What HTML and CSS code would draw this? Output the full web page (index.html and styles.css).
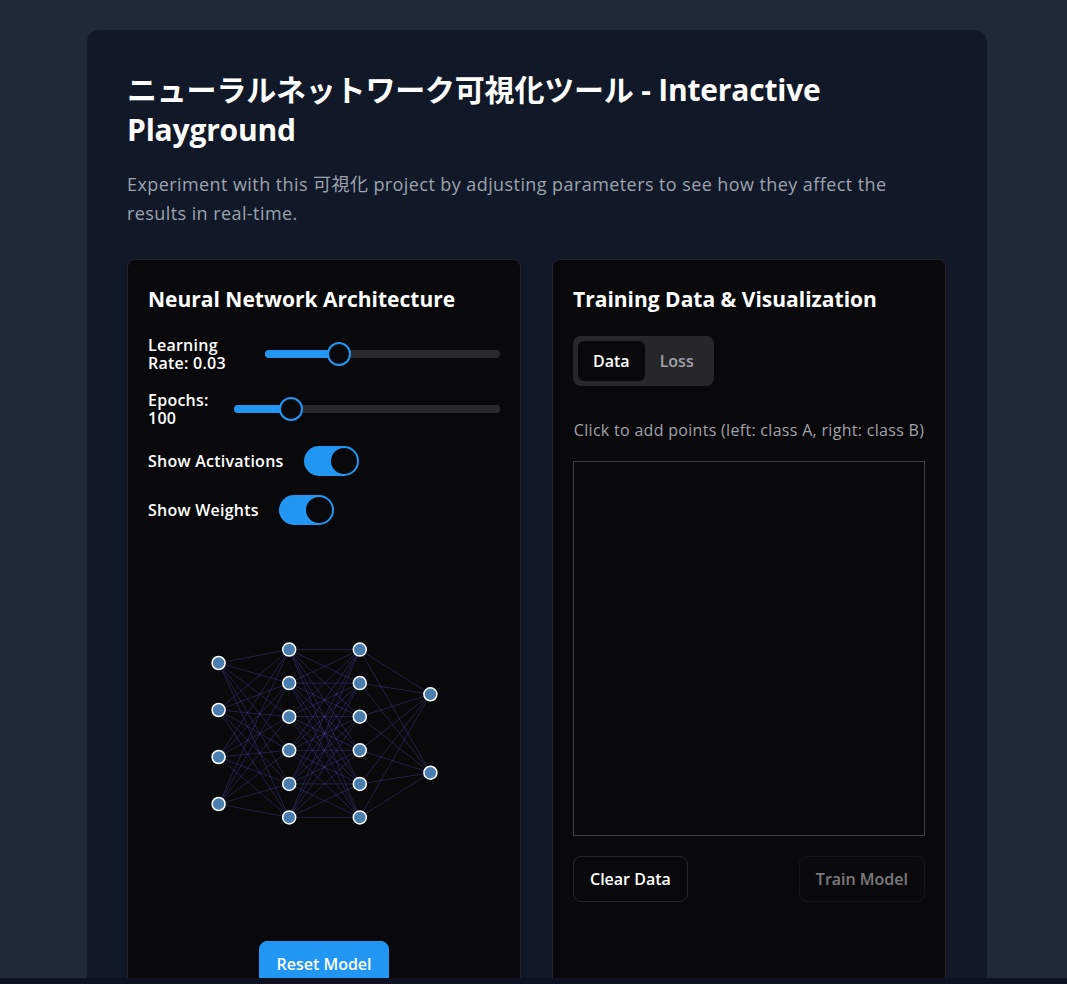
FILE: index.html
```html
<!DOCTYPE html>
<html lang="ja">
<head>
<meta charset="utf-8">
<title>ニューラルネットワーク可視化ツール</title>
<link rel="stylesheet" href="styles.css">
</head>
<body>
<main class="container">
  <h1 class="title">ニューラルネットワーク可視化ツール - Interactive Playground</h1>
  <p class="subtitle">Experiment with this 可視化 project by adjusting parameters to see how they affect the results in real-time.</p>
  <div class="grid">
    <section class="card">
      <h2 class="card-title">Neural Network Architecture</h2>
      <div class="controls">
        <div class="slider-row">
          <span class="ctl-label">Learning Rate: 0.03</span>
          <div class="slider" style="--v:31.3%"><div class="fill"></div><div class="thumb"></div></div>
        </div>
        <div class="slider-row">
          <span class="ctl-label">Epochs: 100</span>
          <div class="slider" style="--v:21.5%"><div class="fill"></div><div class="thumb"></div></div>
        </div>
        <div class="toggle-row">
          <span class="ctl-label">Show Activations</span>
          <span class="toggle"><span class="knob"></span></span>
        </div>
        <div class="toggle-row">
          <span class="ctl-label">Show Weights</span>
          <span class="toggle"><span class="knob"></span></span>
        </div>
      </div>
      <svg class="network" viewBox="0 0 353 375" width="353" height="375">
        <path class="edges" d="M70.6 117L141.2 103.6M70.6 117L141.2 137.1M70.6 117L141.2 170.7M70.6 117L141.2 204.3M70.6 117L141.2 237.9M70.6 117L141.2 271.4M70.6 164L141.2 103.6M70.6 164L141.2 137.1M70.6 164L141.2 170.7M70.6 164L141.2 204.3M70.6 164L141.2 237.9M70.6 164L141.2 271.4M70.6 211L141.2 103.6M70.6 211L141.2 137.1M70.6 211L141.2 170.7M70.6 211L141.2 204.3M70.6 211L141.2 237.9M70.6 211L141.2 271.4M70.6 258L141.2 103.6M70.6 258L141.2 137.1M70.6 258L141.2 170.7M70.6 258L141.2 204.3M70.6 258L141.2 237.9M70.6 258L141.2 271.4"/>
        <path class="edges" d="M141.2 103.6L211.8 103.6M141.2 103.6L211.8 137.1M141.2 103.6L211.8 170.7M141.2 103.6L211.8 204.3M141.2 103.6L211.8 237.9M141.2 103.6L211.8 271.4M141.2 137.1L211.8 103.6M141.2 137.1L211.8 137.1M141.2 137.1L211.8 170.7M141.2 137.1L211.8 204.3M141.2 137.1L211.8 237.9M141.2 137.1L211.8 271.4M141.2 170.7L211.8 103.6M141.2 170.7L211.8 137.1M141.2 170.7L211.8 170.7M141.2 170.7L211.8 204.3M141.2 170.7L211.8 237.9M141.2 170.7L211.8 271.4M141.2 204.3L211.8 103.6M141.2 204.3L211.8 137.1M141.2 204.3L211.8 170.7M141.2 204.3L211.8 204.3M141.2 204.3L211.8 237.9M141.2 204.3L211.8 271.4M141.2 237.9L211.8 103.6M141.2 237.9L211.8 137.1M141.2 237.9L211.8 170.7M141.2 237.9L211.8 204.3M141.2 237.9L211.8 237.9M141.2 237.9L211.8 271.4M141.2 271.4L211.8 103.6M141.2 271.4L211.8 137.1M141.2 271.4L211.8 170.7M141.2 271.4L211.8 204.3M141.2 271.4L211.8 237.9M141.2 271.4L211.8 271.4"/>
        <path class="edges" d="M211.8 103.6L282.4 148.3M211.8 103.6L282.4 226.7M211.8 137.1L282.4 148.3M211.8 137.1L282.4 226.7M211.8 170.7L282.4 148.3M211.8 170.7L282.4 226.7M211.8 204.3L282.4 148.3M211.8 204.3L282.4 226.7M211.8 237.9L282.4 148.3M211.8 237.9L282.4 226.7M211.8 271.4L282.4 148.3M211.8 271.4L282.4 226.7"/>
        <g class="nodes">
          <circle cx="70.6" cy="117" r="6.5"/>
          <circle cx="70.6" cy="164" r="6.5"/>
          <circle cx="70.6" cy="211" r="6.5"/>
          <circle cx="70.6" cy="258" r="6.5"/>
          <circle cx="141.2" cy="103.6" r="6.5"/>
          <circle cx="141.2" cy="137.1" r="6.5"/>
          <circle cx="141.2" cy="170.7" r="6.5"/>
          <circle cx="141.2" cy="204.3" r="6.5"/>
          <circle cx="141.2" cy="237.9" r="6.5"/>
          <circle cx="141.2" cy="271.4" r="6.5"/>
          <circle cx="211.8" cy="103.6" r="6.5"/>
          <circle cx="211.8" cy="137.1" r="6.5"/>
          <circle cx="211.8" cy="170.7" r="6.5"/>
          <circle cx="211.8" cy="204.3" r="6.5"/>
          <circle cx="211.8" cy="237.9" r="6.5"/>
          <circle cx="211.8" cy="271.4" r="6.5"/>
          <circle cx="282.4" cy="148.3" r="6.5"/>
          <circle cx="282.4" cy="226.7" r="6.5"/>
        </g>
      </svg>
      <div class="center-actions">
        <button class="btn btn-primary">Reset Model</button>
      </div>
    </section>
    <section class="card">
      <h2 class="card-title">Training Data &amp; Visualization</h2>
      <div class="tabs">
        <button class="tab tab-active">Data</button>
        <button class="tab">Loss</button>
      </div>
      <p class="hint">Click to add points (left: class A, right: class B)</p>
      <div class="canvas"></div>
      <div class="row-actions">
        <button class="btn btn-outline">Clear Data</button>
        <button class="btn btn-outline btn-disabled">Train Model</button>
      </div>
    </section>
  </div>
</main>
<div class="bottom-bar"></div>
</body>
</html>
```

FILE: styles.css
```css
html, body {
  overflow: hidden;
}

body {
  margin: 0;
  padding: 30px 0 0 7px;
  background: #1f2937;
  font-family: "Open Sans", "Noto Sans CJK JP", sans-serif;
  color: #ffffff;
}

.container {
  box-sizing: border-box;
  width: 900px;
  margin: 0 auto;
  padding: 40px;
  background: #111827;
  border-radius: 12px;
}

.title {
  margin: 0;
  font-size: 30px;
  line-height: 40px;
  font-weight: 700;
  letter-spacing: -0.2px;
}

.subtitle {
  margin: 20px 0 0;
  font-size: 18px;
  line-height: 29px;
  letter-spacing: 0.42px;
  color: #9ca3af;
}

.grid {
  display: grid;
  grid-template-columns: 394px 394px;
  gap: 31px;
  margin-top: 31px;
  align-items: stretch;
}

.card {
  background: #09090b;
  border: 1px solid #232327;
  border-radius: 8px;
  padding: 20px;
  min-height: 760px;
}

.card-title {
  margin: 0;
  padding-top: 1px;
  font-size: 21px;
  line-height: 36px;
  font-weight: 700;
}

.controls {
  display: flex;
  flex-direction: column;
  gap: 19px;
  margin-top: 19px;
}

.slider-row {
  display: flex;
  align-items: center;
  gap: 16px;
}

.ctl-label {
  font-size: 16px;
  line-height: 18px;
  font-weight: 600;
  letter-spacing: 0.25px;
  color: #ffffff;
}

.slider {
  position: relative;
  width: 100%;
  height: 8px;
  border-radius: 4px;
  background: #2a2a2d;
}

.slider .fill {
  width: var(--v);
  height: 100%;
  border-radius: 4px;
  background: #2196f3;
}

.slider .thumb {
  position: absolute;
  top: 50%;
  left: var(--v);
  width: 20px;
  height: 20px;
  margin: -12px 0 0 -12px;
  border: 2px solid #2196f3;
  border-radius: 50%;
  background: #09090b;
}

.toggle-row {
  display: flex;
  align-items: center;
  gap: 20px;
}

.toggle {
  display: flex;
  justify-content: flex-end;
  align-items: center;
  box-sizing: border-box;
  width: 55px;
  height: 30px;
  padding: 2px;
  border-radius: 15px;
  background: #2196f3;
}

.toggle .knob {
  width: 26px;
  height: 26px;
  border-radius: 50%;
  background: #09090b;
}

.network {
  display: block;
  margin-top: 21px;
}

.edges {
  fill: none;
  stroke: #6366f1;
  stroke-opacity: 0.26;
  stroke-width: 1;
}

.nodes circle {
  fill: #4a7eaf;
  stroke: #ffffff;
  stroke-width: 1.5;
}

.center-actions {
  display: flex;
  justify-content: center;
  margin-top: 20px;
}

.btn {
  font-family: "Open Sans", "Noto Sans CJK JP", sans-serif;
  font-size: 16px;
  line-height: 24px;
  font-weight: 600;
  padding: 10px 16px;
  border-radius: 8px;
  cursor: pointer;
}

.btn-primary {
  background: #2196f3;
  color: #ffffff;
  border: 1px solid #2196f3;
}

.btn-outline {
  background: transparent;
  color: #ffffff;
  border: 1px solid #27272a;
}

.btn-disabled {
  opacity: 0.45;
}

.tabs {
  display: inline-flex;
  margin-top: 19px;
  padding: 5px;
  border-radius: 8px;
  background: #27272a;
}

.tab {
  font-family: "Open Sans", "Noto Sans CJK JP", sans-serif;
  font-size: 16px;
  font-weight: 600;
  line-height: 40px;
  padding: 0 15px;
  border: 0;
  border-radius: 6px;
  background: transparent;
  color: #a1a1aa;
}

.tab-active {
  background: #09090b;
  color: #ffffff;
}

.hint {
  margin: 32px 0 0;
  text-align: center;
  font-size: 16px;
  line-height: 24px;
  letter-spacing: 0.3px;
  color: #a1a1aa;
}

.canvas {
  box-sizing: border-box;
  height: 375px;
  margin-top: 19px;
  border: 1px solid #3f3f46;
  background: #09090b;
}

.row-actions {
  display: flex;
  justify-content: space-between;
  margin-top: 20px;
}

.bottom-bar {
  position: fixed;
  left: 0;
  right: 0;
  bottom: 0;
  height: 6px;
  background: #0d1322;
}
```
